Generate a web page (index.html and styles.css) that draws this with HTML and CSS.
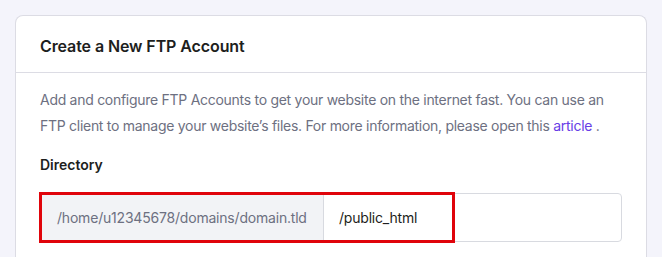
FILE: index.html
```html
<!DOCTYPE html>
<html lang="en">
<head>
    <meta charset="UTF-8">
    <meta name="viewport" content="width=device-width, initial-scale=1.0">
    <title>Create a New FTP Account</title>
    <link rel="stylesheet" href="styles.css">
</head>
<body>

    <div class="card">
        <div class="card-header">
            <h2>Create a New FTP Account</h2>
        </div>
        <div class="card-body">
            <p class="intro">Add and configure FTP Accounts to get your website on the internet fast. You can use an FTP client to manage your website’s files. For more information, please open this <a href="#">article</a> .</p>

            <label class="field-label" for="dir">Directory</label>
            <div class="input-group">
                <span class="prefix">/home/u12345678/domains/domain.tld</span>
                <input type="text" id="dir" value="/public_html">
                <div class="highlight"></div>
            </div>
        </div>
    </div>

</body>
</html>
```

FILE: styles.css
```css
body {
    margin: 0;
    background-color: #f4f4fb;
    font-family: 'Inter', 'Liberation Sans', sans-serif;
    color: #1d1e20;
    padding: 15px 15px 0 15px;
}
.card {
    width: 630px;
    background: #fff;
    border: 1px solid #dcdce4;
    border-bottom: none;
    border-radius: 8px 8px 0 0;
    overflow: hidden;
}
.card-header {
    height: 56px;
    padding: 0 24px;
    display: flex;
    align-items: center;
    border-bottom: 1px solid #dcdce4;
}
.card-header h2 {
    margin: 0;
    font-size: 16px;
    font-weight: 600;
    letter-spacing: -0.1px;
    padding-top: 3px;
}
.card-body {
    padding: 14px 24px 16px 24px;
}
.intro {
    margin: 0;
    font-size: 14px;
    line-height: 26px;
    letter-spacing: -0.28px;
    color: #6d7081;
}
.intro a {
    color: #673de6;
    text-decoration: none;
}
.field-label {
    display: block;
    margin-top: 13px;
    font-size: 14px;
    font-weight: 600;
    line-height: 26px;
}
.input-group {
    position: relative;
    display: flex;
    margin-top: 15px;
    width: 580px;
    height: 47px;
    border: 1px solid #d8dae0;
    border-radius: 4px;
}
.prefix {
    display: flex;
    align-items: center;
    width: 266px;
    padding-left: 16px;
    background: #f2f3f6;
    border-right: 1px solid #d8dae0;
    font-size: 14px;
    letter-spacing: -0.2px;
    color: #6d7081;
}
.input-group input {
    flex: 1;
    border: none;
    outline: none;
    padding: 0 15px;
    font-family: inherit;
    font-size: 14px;
    letter-spacing: -0.2px;
    color: #1d1e20;
    background: transparent;
}
.highlight {
    position: absolute;
    left: -2px;
    top: -2px;
    width: 410px;
    height: 45px;
    border: 3px solid #e0040b;
}
```
